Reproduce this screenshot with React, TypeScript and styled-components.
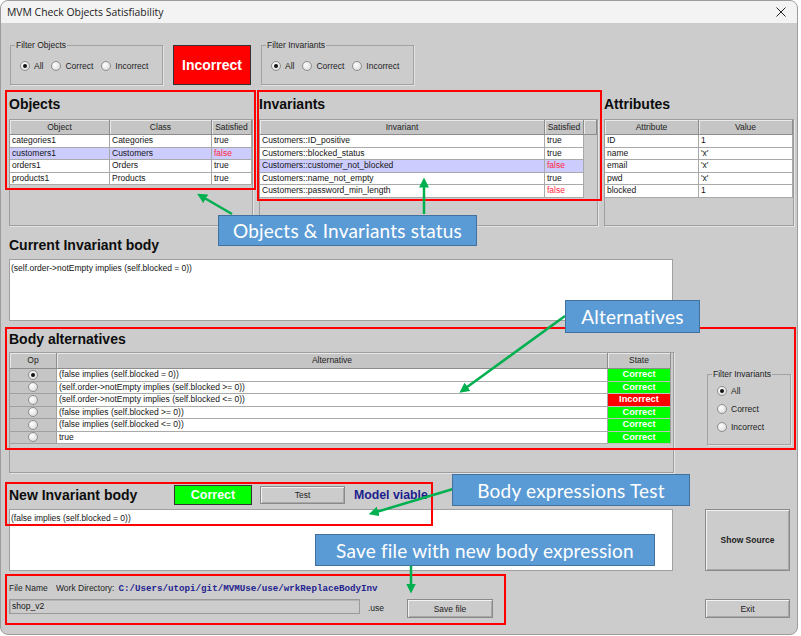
import React from 'react'
import styled, { createGlobalStyle } from 'styled-components'

const GlobalStyle = createGlobalStyle`
  html, body { margin: 0; padding: 0; background: #ffffff; }
  * { box-sizing: border-box; }
  body { font-family: 'Liberation Sans', Arial, sans-serif; }
`

const Window = styled.div`
  position: relative;
  width: 798px;
  height: 635px;
  border: 1px solid #9c9c9c;
  border-radius: 8px;
  overflow: hidden;
  background: #cccccc;
  font-size: 8.5px;
  color: #111;
`

const TitleBar = styled.div`
  height: 22px;
  display: flex;
  align-items: center;
  justify-content: space-between;
  padding: 0 11px 0 6px;
  background: #f3f3f3;
  font-family: 'Open Sans', 'Noto Sans', sans-serif;
  font-size: 10.4px;
  color: #1b1b1b;
`

const Content = styled.div`
  padding-left: 8px;
`

const FilterRow = styled.div`
  display: flex;
  align-items: flex-start;
  gap: 10px;
  margin-top: 22px;
  padding-left: 1px;
  height: 40px;
`

const GroupBox = styled.div<{ $w: number; $h: number }>`
  width: ${p => p.$w}px;
  height: ${p => p.$h}px;
  border: 1px solid #a2a2a2;
  box-shadow: 1px 1px 0 #e2e2e2;
  display: flex;
  flex-direction: column;
  padding-left: 4px;
`

const GroupTitle = styled.div`
  align-self: flex-start;
  margin-top: -6px;
  padding: 0 1px;
  line-height: 11px;
  background: #cccccc;
  color: #222;
`

const RadioLine = styled.div<{ $vertical?: boolean }>`
  display: flex;
  flex-direction: ${p => (p.$vertical ? 'column' : 'row')};
  gap: ${p => (p.$vertical ? '6px' : '8px')};
  margin-top: ${p => (p.$vertical ? '5px' : '9px')};
  padding-left: 5px;
`

const RadioOption = styled.label`
  display: flex;
  align-items: center;
  gap: 4px;
  height: 12px;
  color: #222;
`

const RadioDot = styled.span<{ $on?: boolean }>`
  width: 10px;
  height: 10px;
  border-radius: 50%;
  border: 1px solid #8e8e8e;
  background: radial-gradient(circle at 35% 35%, #ffffff, #d4d4d4);
  display: inline-flex;
  align-items: center;
  justify-content: center;
  flex: none;
  &::after {
    content: '';
    width: 4px;
    height: 4px;
    border-radius: 50%;
    background: ${p => (p.$on ? '#111' : 'transparent')};
  }
`

const StatusBox = styled.div<{ $ok?: boolean; $w: number; $h: number; $size: number }>`
  width: ${p => p.$w}px;
  height: ${p => p.$h}px;
  display: flex;
  align-items: center;
  justify-content: center;
  background: ${p => (p.$ok ? '#00ff00' : '#ff0000')};
  border: 1px solid #333;
  color: #ffffff;
  font-weight: bold;
  font-size: ${p => p.$size}px;
  flex: none;
`

const PanelsRow = styled.div`
  display: grid;
  grid-template-columns: 244px 339px 190px;
  column-gap: 6px;
  margin-top: 11px;
`

const Panel = styled.div`
  display: flex;
  flex-direction: column;
  gap: 6px;
`

const Heading = styled.div<{ $w?: number }>`
  height: 17px;
  line-height: 17px;
  font-size: 14px;
  font-weight: bold;
  color: #0d0d0d;
  white-space: nowrap;
  width: ${p => (p.$w ? `${p.$w}px` : 'auto')};
  flex: none;
`

const Pane = styled.div<{ $h: number; $w?: number }>`
  height: ${p => p.$h}px;
  width: ${p => (p.$w ? `${p.$w}px` : 'auto')};
  border: 1px solid #9e9e9e;
  box-shadow: 1px 1px 0 #e4e4e4;
  background: #cccccc;
  flex: none;
`

const Table = styled.div<{ $cols: string }>`
  display: grid;
  grid-template-columns: ${p => p.$cols};
`

const HeadCell = styled.div<{ $h?: number }>`
  height: ${p => p.$h || 15}px;
  line-height: ${p => (p.$h || 15) - 1}px;
  text-align: center;
  background: #c5c5c5;
  border-right: 1px solid #8c8c8c;
  border-bottom: 1px solid #8c8c8c;
  box-shadow: inset 1px 1px 0 #e9e9e9;
  color: #222;
  white-space: nowrap;
  overflow: hidden;
`

const Cell = styled.div<{ $sel?: boolean; $bad?: boolean }>`
  height: 12.5px;
  line-height: 11.5px;
  padding-left: 2px;
  background: ${p => (p.$sel ? '#ccccff' : '#ffffff')};
  color: ${p => (p.$bad ? '#ff1e3c' : '#141414')};
  border-right: 1px solid #a9a9a9;
  border-bottom: 1px solid #a9a9a9;
  white-space: nowrap;
  overflow: hidden;
`

const EmptyCell = styled.div``

const OpCell = styled.div`
  height: 12.5px;
  display: flex;
  align-items: center;
  justify-content: center;
  background: #c5c5c5;
  border-right: 1px solid #a0a0a0;
  border-bottom: 1px solid #a0a0a0;
`

const StateCell = styled.div<{ $ok: boolean }>`
  height: 12.5px;
  line-height: 11.5px;
  text-align: center;
  background: ${p => (p.$ok ? '#00ff00' : '#ff0000')};
  color: #ffffff;
  font-weight: bold;
  font-size: 9.3px;
  border-right: 1px solid #a0a0a0;
  border-bottom: 1px solid #c0c0c0;
`

const Block = styled.div<{ $top: number; $gap?: number }>`
  display: flex;
  flex-direction: column;
  gap: ${p => p.$gap || 0}px;
  margin-top: ${p => p.$top}px;
`

const TextArea = styled.div<{ $h: number }>`
  width: 664px;
  height: ${p => p.$h}px;
  background: #ffffff;
  border: 1px solid #a0a0a0;
  padding: 3px 1px;
  line-height: 10px;
  color: #141414;
  flex: none;
`

const AltRow = styled.div`
  display: flex;
  align-items: flex-start;
  margin-top: 10px;
`

const AltColumn = styled.div`
  display: flex;
  flex-direction: column;
  gap: 4px;
`

const SideGroup = styled.div`
  margin: 43px 0 0 33px;
`

const Line = styled.div<{ $top: number; $h?: number; $align?: string }>`
  display: flex;
  align-items: ${p => p.$align || 'center'};
  margin-top: ${p => p.$top}px;
  height: ${p => (p.$h ? `${p.$h}px` : 'auto')};
`

const Button = styled.div<{ $w: number; $h: number; $ml?: number; $bold?: boolean }>`
  width: ${p => p.$w}px;
  height: ${p => p.$h}px;
  margin-left: ${p => p.$ml || 0}px;
  display: flex;
  align-items: center;
  justify-content: center;
  background: #cccccc;
  border: 1px solid #8a8a8a;
  box-shadow: inset 1px 1px 0 #f2f2f2, inset -1px -1px 0 #a8a8a8;
  color: #222;
  font-weight: ${p => (p.$bold ? 'bold' : 'normal')};
  flex: none;
`

const ModelViable = styled.div`
  margin-left: 9px;
  font-size: 12.3px;
  font-weight: bold;
  color: #1d1d8e;
`

const Label = styled.span<{ $w?: number; $mr?: number }>`
  display: inline-block;
  width: ${p => (p.$w ? `${p.$w}px` : 'auto')};
  margin-right: ${p => p.$mr || 0}px;
  color: #222;
  white-space: nowrap;
`

const PathText = styled.span`
  font-family: 'Liberation Mono', 'Courier New', monospace;
  font-weight: bold;
  font-size: 9.2px;
  color: #24248f;
  white-space: nowrap;
`

const FileField = styled.div`
  width: 351px;
  height: 15px;
  line-height: 13px;
  padding-left: 2px;
  background: #cccccc;
  border: 1px solid #9a9a9a;
  box-shadow: inset 1px 1px 0 #b5b5b5;
  color: #141414;
  flex: none;
`

const Ext = styled.span`
  width: 47px;
  line-height: 19px;
  padding-left: 8px;
  color: #222;
  flex: none;
`

const RedFrame = styled.div<{ $x: number; $y: number; $w: number; $h: number }>`
  position: absolute;
  left: ${p => p.$x}px;
  top: ${p => p.$y}px;
  width: ${p => p.$w}px;
  height: ${p => p.$h}px;
  border: 2px solid #ff0000;
  pointer-events: none;
`

const Callout = styled.div<{ $x: number; $y: number; $w: number; $h: number }>`
  position: absolute;
  left: ${p => p.$x}px;
  top: ${p => p.$y}px;
  width: ${p => p.$w}px;
  height: ${p => p.$h}px;
  display: flex;
  align-items: center;
  justify-content: center;
  background: #5b9bd5;
  border: 1px solid #41719c;
  color: #ffffff;
  font-family: Lato, 'Open Sans', sans-serif;
  font-size: 19px;
  letter-spacing: 0.2px;
  white-space: nowrap;
`

const ArrowLayer = styled.svg`
  position: absolute;
  left: -1px;
  top: -1px;
  pointer-events: none;
`

const objects = [
  { o: 'categories1', c: 'Categories', s: true },
  { o: 'customers1', c: 'Customers', s: false, sel: true },
  { o: 'orders1', c: 'Orders', s: true },
  { o: 'products1', c: 'Products', s: true }
]

const invariants = [
  { n: 'Customers::ID_positive', s: true },
  { n: 'Customers::blocked_status', s: true },
  { n: 'Customers::customer_not_blocked', s: false, sel: true },
  { n: 'Customers::name_not_empty', s: true },
  { n: 'Customers::password_min_length', s: false }
]

const attributes = [
  ['ID', '1'],
  ['name', "'x'"],
  ['email', "'x'"],
  ['pwd', "'x'"],
  ['blocked', '1']
]

const alternatives = [
  { t: '(false implies (self.blocked = 0))', ok: true },
  { t: '(self.order->notEmpty implies (self.blocked >= 0))', ok: true },
  { t: '(self.order->notEmpty implies (self.blocked <= 0))', ok: false },
  { t: '(false implies (self.blocked >= 0))', ok: true },
  { t: '(false implies (self.blocked <= 0))', ok: true },
  { t: 'true', ok: true }
]

const FilterGroup = ({ title, w, h, vertical }: { title: string; w: number; h: number; vertical?: boolean }) => (
  <GroupBox $w={w} $h={h}>
    <GroupTitle>{title}</GroupTitle>
    <RadioLine $vertical={vertical}>
      <RadioOption><RadioDot $on />All</RadioOption>
      <RadioOption><RadioDot />Correct</RadioOption>
      <RadioOption><RadioDot />Incorrect</RadioOption>
    </RadioLine>
  </GroupBox>
)

const Arrows = () => (
  <ArrowLayer width="800" height="636">
    <defs>
      <marker id="head" markerWidth="4" markerHeight="4" refX="2.2" refY="2" orient="auto" markerUnits="strokeWidth">
        <path d="M0,0 L4,2 L0,4 z" fill="#00b050" />
      </marker>
    </defs>
    <g stroke="#00b050" strokeWidth="2.5" fill="none" markerEnd="url(#head)">
      <line x1="232" y1="214" x2="201" y2="196" />
      <line x1="424" y1="214" x2="424" y2="182" />
      <line x1="565" y1="316" x2="463" y2="390" />
      <line x1="453" y1="489" x2="373" y2="513" />
      <line x1="411" y1="566" x2="411" y2="589" />
    </g>
  </ArrowLayer>
)

export default function App() {
  return (
    <>
      <GlobalStyle />
      <Window>
        <TitleBar>
          <span>MVM Check Objects Satisfiability</span>
          <svg width="10" height="10" viewBox="0 0 10 10">
            <path d="M0.5 0.5 L9.5 9.5 M9.5 0.5 L0.5 9.5" stroke="#222" strokeWidth="1" />
          </svg>
        </TitleBar>

        <Content>
          <FilterRow>
            <FilterGroup title="Filter Objects" w={153} h={40} />
            <StatusBox $w={78} $h={40} $size={14}>Incorrect</StatusBox>
            <FilterGroup title="Filter Invariants" w={153} h={40} />
          </FilterRow>

          <PanelsRow>
            <Panel>
              <Heading>Objects</Heading>
              <Pane $h={107}>
                <Table $cols="100px 102px 40px">
                  <HeadCell>Object</HeadCell>
                  <HeadCell>Class</HeadCell>
                  <HeadCell>Satisfied</HeadCell>
                  {objects.map(r => (
                    <React.Fragment key={r.o}>
                      <Cell $sel={r.sel}>{r.o}</Cell>
                      <Cell $sel={r.sel}>{r.c}</Cell>
                      <Cell $sel={r.sel} $bad={!r.s}>{r.s ? 'true' : 'false'}</Cell>
                    </React.Fragment>
                  ))}
                </Table>
              </Pane>
            </Panel>

            <Panel>
              <Heading>Invariants</Heading>
              <Pane $h={107}>
                <Table $cols="285px 39px 13px">
                  <HeadCell>Invariant</HeadCell>
                  <HeadCell>Satisfied</HeadCell>
                  <HeadCell />
                  {invariants.map(r => (
                    <React.Fragment key={r.n}>
                      <Cell $sel={r.sel}>{r.n}</Cell>
                      <Cell $sel={r.sel} $bad={!r.s}>{r.s ? 'true' : 'false'}</Cell>
                      <EmptyCell />
                    </React.Fragment>
                  ))}
                </Table>
              </Pane>
            </Panel>

            <Panel>
              <Heading>Attributes</Heading>
              <Pane $h={107}>
                <Table $cols="94px 94px">
                  <HeadCell>Attribute</HeadCell>
                  <HeadCell>Value</HeadCell>
                  {attributes.map(([a, v]) => (
                    <React.Fragment key={a}>
                      <Cell>{a}</Cell>
                      <Cell>{v}</Cell>
                    </React.Fragment>
                  ))}
                </Table>
              </Pane>
            </Panel>
          </PanelsRow>

          <Block $top={11} $gap={5}>
            <Heading>Current Invariant body</Heading>
            <TextArea $h={62}>(self.order-&gt;notEmpty implies (self.blocked = 0))</TextArea>
          </Block>

          <AltRow>
            <AltColumn>
              <Heading>Body alternatives</Heading>
              <Pane $h={121} $w={665}>
                <Table $cols="47px 551px 63px">
                  <HeadCell $h={16}>Op</HeadCell>
                  <HeadCell $h={16}>Alternative</HeadCell>
                  <HeadCell $h={16}>State</HeadCell>
                  {alternatives.map((r, i) => (
                    <React.Fragment key={r.t}>
                      <OpCell><RadioDot $on={i === 0} /></OpCell>
                      <Cell>{r.t}</Cell>
                      <StateCell $ok={r.ok}>{r.ok ? 'Correct' : 'Incorrect'}</StateCell>
                    </React.Fragment>
                  ))}
                </Table>
              </Pane>
            </AltColumn>
            <SideGroup>
              <FilterGroup title="Filter Invariants" w={84} h={71} vertical />
            </SideGroup>
          </AltRow>

          <Line $top={12} $h={20}>
            <Heading $w={165}>New Invariant body</Heading>
            <StatusBox $ok $w={78} $h={20} $size={12.5}>Correct</StatusBox>
            <Button $w={85} $h={18} $ml={8}>Test</Button>
            <ModelViable>Model viable</ModelViable>
          </Line>

          <Line $top={4} $align="flex-start">
            <TextArea $h={62}>(false implies (self.blocked = 0))</TextArea>
            <Button $w={85} $h={62} $ml={32} $bold>Show Source</Button>
          </Line>

          <Line $top={11} $h={12}>
            <Label $w={47}>File Name</Label>
            <Label $mr={4}>Work Directory:</Label>
            <PathText>C:/Users/utopi/git/MVMUse/use/wrkReplaceBodyInv</PathText>
          </Line>

          <Line $top={5} $align="flex-start">
            <FileField>shop_v2</FileField>
            <Ext>.use</Ext>
            <Button $w={86} $h={19}>Save file</Button>
            <Button $w={85} $h={19} $ml={212}>Exit</Button>
          </Line>
        </Content>

        <RedFrame $x={4} $y={89} $w={251} $h={100} />
        <RedFrame $x={256} $y={89} $w={345} $h={111} />
        <RedFrame $x={4} $y={326} $w={791} $h={123} />
        <RedFrame $x={4} $y={481} $w={428} $h={44} />
        <RedFrame $x={4} $y={573} $w={501} $h={51} />

        <Arrows />

        <Callout $x={217} $y={214} $w={259} $h={31}>Objects &amp; Invariants status</Callout>
        <Callout $x={564} $y={299} $w={135} $h={33}>Alternatives</Callout>
        <Callout $x={451} $y={473} $w={238} $h={32}>Body expressions Test</Callout>
        <Callout $x={314} $y={533} $w={340} $h={32}>Save file with new body expression</Callout>
      </Window>
    </>
  )
}
